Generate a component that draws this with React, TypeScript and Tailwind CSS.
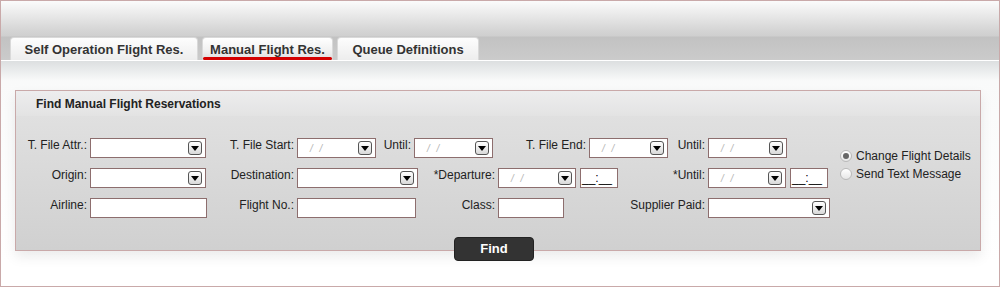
import type { ReactNode } from "react";

const FONT = "font-['Liberation_Sans',Arial,sans-serif]";

function Arrow() {
  return (
    <span className="flex h-[14px] w-[14px] shrink-0 items-center justify-center rounded-[3px] border border-[#555] bg-[linear-gradient(to_bottom,#ffffff,#d9d9d9)]">
      <span className="h-0 w-0 border-x-[4px] border-t-[5px] border-x-transparent border-t-black" />
    </span>
  );
}

function Select({ w, date }: { w: string; date?: boolean }) {
  return (
    <div className={`${w} flex h-[20px] shrink-0 items-center justify-between border border-[#8d6e6e] bg-white pl-[12px] pr-[3px]`}>
      <span className="text-[10px] italic tracking-[2px] text-[#b4b4b4]">{date ? "/ /" : ""}</span>
      <Arrow />
    </div>
  );
}

function Input({ w }: { w: string }) {
  return <div className={`${w} h-[20px] shrink-0 border border-[#8d6e6e] bg-white`} />;
}

function Time() {
  return (
    <div className="ml-[4px] flex h-[20px] w-[38px] shrink-0 items-center border border-[#8d6e6e] bg-white pl-[1px] text-[12px] leading-[14px] text-black">
      __:__
    </div>
  );
}

function Label({ w, children }: { w: string; children: ReactNode }) {
  return <div className={`${w} shrink-0 pr-[3px] text-right text-[12px] leading-[14px] text-[#222]`}>{children}</div>;
}

function Radio({ checked, children }: { checked?: boolean; children: ReactNode }) {
  return (
    <div className="flex items-center gap-[4px] text-[12px] leading-[14px] text-[#222]">
      <span className="flex h-[12px] w-[12px] items-center justify-center rounded-full border border-[#b9b9b9] bg-[linear-gradient(to_bottom,#ffffff,#e6e6e6)]">
        {checked && <span className="h-[6px] w-[6px] rounded-full bg-[#666]" />}
      </span>
      {children}
    </div>
  );
}

function Tab({ w, active, children }: { w: string; active?: boolean; children: ReactNode }) {
  return (
    <div
      className={`${w} relative flex h-[23px] items-center justify-center rounded-t-[4px] border border-b-0 border-[#d9d9d9] pt-[2px] text-[13px] font-bold text-[#333] ${
        active ? "bg-[linear-gradient(to_bottom,#ffffff,#f0f0f0_60%,#dcdcdc)]" : "bg-[linear-gradient(to_bottom,#fdfdfd,#ededed)]"
      }`}
    >
      {children}
      {active && <span className="absolute bottom-0 left-0 right-0 h-[3px] rounded-[2px] bg-[#d40000]" />}
    </div>
  );
}

export default function App() {
  return (
    <div className={`${FONT} h-[287px] w-[1000px] overflow-hidden border border-[#c9a9a9] bg-white`}>
      <div className="flex h-[59px] items-end gap-[4px] bg-[linear-gradient(to_bottom,#fbfbfb_0px,#e9e9e9_14px,#d4d4d4_30px,#cfcfcf_35px,#c2c2c2_36px,#cbcbcb_59px)] pl-[9px]">
        <Tab w="w-[188px]">Self Operation Flight Res.</Tab>
        <Tab w="w-[131px]" active>Manual Flight Res.</Tab>
        <Tab w="w-[142px]">Queue Definitions</Tab>
      </div>
      <div className="border-t border-white bg-[linear-gradient(to_bottom,#dcdfe0_0px,#f9fafa_20px,#ffffff_100%)] px-[14px] pt-[29px]">
        <div className="w-[966px] border border-[#c9a9a9] shadow-[0_6px_12px_rgba(0,0,0,0.08)]">
          <div className="flex h-[25px] items-center bg-[linear-gradient(to_bottom,#ededee,#e3e3e3)] pl-[20px] text-[12px] font-bold text-[#222]">
            Find Manual Flight Reservations
          </div>
          <div className="flex h-[134px] bg-[linear-gradient(to_bottom,#e0e0e0,#d0d0d0)] pt-[22px]">
            <div className="flex flex-col gap-[10px]">
              <div className="flex items-start">
                <Label w="w-[74px]">T. File Attr.:</Label>
                <Select w="w-[116px]" />
                <Label w="w-[91px]">T. File Start:</Label>
                <Select w="w-[79px]" date />
                <Label w="w-[38px]">Until:</Label>
                <Select w="w-[79px]" date />
                <Label w="w-[96px]">T. File End:</Label>
                <Select w="w-[79px]" date />
                <Label w="w-[40px]">Until:</Label>
                <Select w="w-[79px]" date />
              </div>
              <div className="flex items-start">
                <Label w="w-[74px]">Origin:</Label>
                <Select w="w-[116px]" />
                <Label w="w-[91px]">Destination:</Label>
                <Select w="w-[121px]" />
                <Label w="w-[80px]">*Departure:</Label>
                <Select w="w-[78px]" date />
                <Time />
                <Label w="w-[90px]">*Until:</Label>
                <Select w="w-[78px]" date />
                <Time />
              </div>
              <div className="flex items-start">
                <Label w="w-[74px]">Airline:</Label>
                <Input w="w-[117px]" />
                <Label w="w-[90px]">Flight No.:</Label>
                <Input w="w-[119px]" />
                <Label w="w-[82px]">Class:</Label>
                <Input w="w-[66px]" />
                <Label w="w-[144px]">Supplier Paid:</Label>
                <Select w="w-[122px]" />
              </div>
            </div>
            <div className="ml-[10px] mt-[11px] flex flex-col gap-[4px]">
              <Radio checked>Change Flight Details</Radio>
              <Radio>Send Text Message</Radio>
            </div>
          </div>
        </div>
        <div className="relative -mt-[14px] flex pl-[439px]">
          <button className="h-[24px] w-[80px] rounded-[4px] border border-[#222] bg-[#333] text-[13px] font-bold text-white">
            Find
          </button>
        </div>
      </div>
    </div>
  );
}
